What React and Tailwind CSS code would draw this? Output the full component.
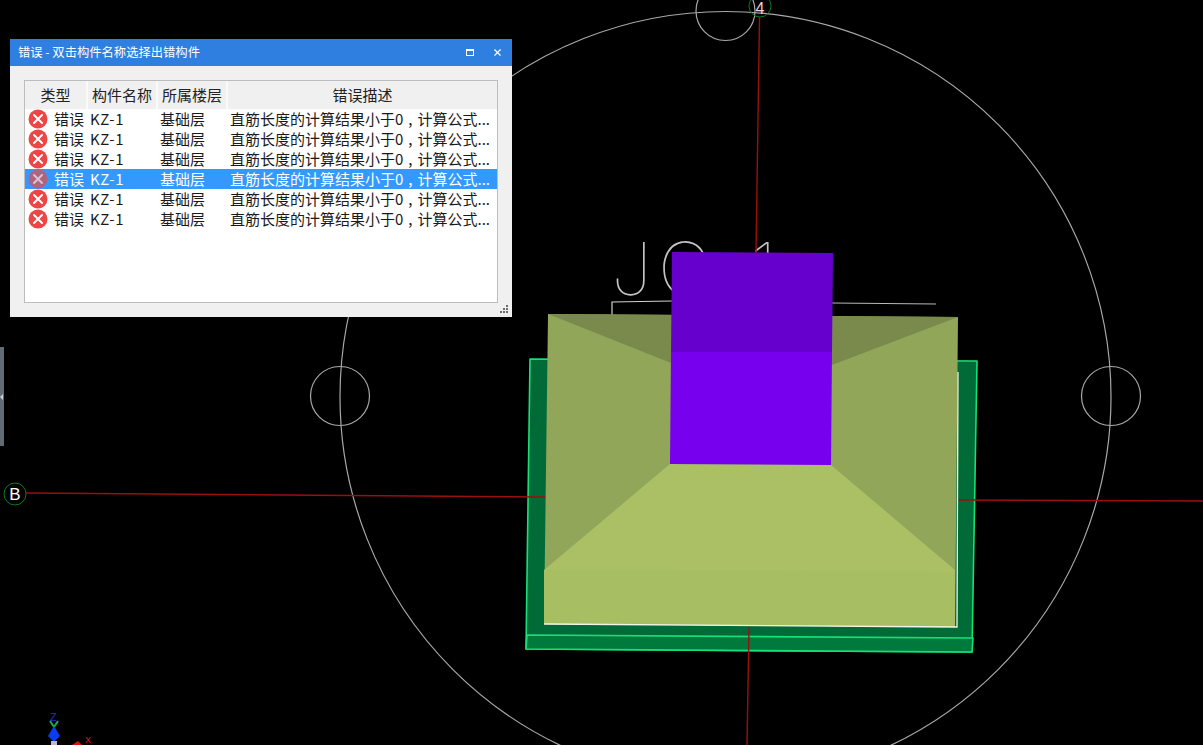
import React from 'react';
import { X } from 'lucide-react';

const rows = [false, false, false, true, false, false];
const uiFont = 'font-["Noto_Sans_CJK_SC","Liberation_Sans",sans-serif]';

// red round error badge from the list's first column
const ErrorIcon = ({ selected }) => (
  <svg width="20" height="20" viewBox="0 0 20 20" className="shrink-0">
    <circle cx="10" cy="10" r="9.5" fill={selected ? '#b0637f' : '#ee4545'} />
    <path d="M6 6 L14 14 M14 6 L6 14" stroke={selected ? '#d9c3d6' : '#ffffff'} strokeWidth="2" strokeLinecap="round" />
  </svg>
);

const ErrorRow = ({ selected }) => (
  <div className={`grid h-5 grid-cols-[63px_70px_70px_1fr] items-center text-[15px] leading-5 whitespace-nowrap ${selected ? 'bg-[#3399ff] text-white' : 'text-[#1a1a1a]'}`}>
    <div className="flex items-center gap-[6px] pl-[3px]">
      <ErrorIcon selected={selected} />
      <span>错误</span>
    </div>
    <div className="pl-[2px] tracking-[0.6px]">KZ-1</div>
    <div className="pl-[2px]">基础层</div>
    <div className="pl-[2px]">
      直筋长度的计算结果小于0<span className="mx-[5px]">,</span>计算公式...
    </div>
  </div>
);

const ErrorDialog = () => (
  <div className={`absolute left-[10px] top-[39px] flex h-[278px] w-[502px] flex-col bg-[#f0f0f0] ${uiFont}`}>
    <div className="flex h-[27px] items-center justify-between bg-[#2e7fe0] pl-2 pr-[9px] text-[12.3px] text-white">
      <span>错误 - 双击构件名称选择出错构件</span>
      <div className="flex items-center gap-[18px]">
        <span className="h-[7px] w-[8px] border border-t-2 border-white" />
        <X size={11} strokeWidth={2.5} />
      </div>
    </div>
    <div className="mx-[14px] mt-[14px] h-[223px] w-[474px] border border-[#bdbdbd] bg-white">
      <div className="grid h-[28px] grid-cols-[63px_70px_70px_1fr] items-center bg-[#f0f0f0] text-center text-[15px] leading-[28px] text-[#222222]">
        <div className="h-full border-r-2 border-[#fafafa]">类型</div>
        <div className="h-full border-r-2 border-[#fafafa]">构件名称</div>
        <div className="h-full border-r-2 border-[#fafafa]">所属楼层</div>
        <div className="h-full">错误描述</div>
      </div>
      {rows.map((selected, i) => (
        <ErrorRow key={i} selected={selected} />
      ))}
    </div>
    <svg width="10" height="9" viewBox="0 0 10 9" className="absolute bottom-[3px] right-[2px]">
      <g fill="#6e6e6e">
        <rect x="6" y="0" width="2" height="2" />
        <rect x="3" y="3" width="2" height="2" />
        <rect x="6" y="3" width="2" height="2" />
        <rect x="0" y="6" width="2" height="2" />
        <rect x="3" y="6" width="2" height="2" />
        <rect x="6" y="6" width="2" height="2" />
      </g>
    </svg>
  </div>
);

// the CAD viewport: a drawing, so everything sits in one svg
const Viewport = () => (
  <svg width="1203" height="745" viewBox="0 0 1203 745" className="absolute left-0 top-0">
    <g fill="none" stroke="#a8a8a8" strokeWidth="1.2">
      <circle cx="725.5" cy="397" r="385.5" />
      <circle cx="340" cy="396" r="29.5" />
      <circle cx="1111" cy="396" r="29.5" />
      <circle cx="725.5" cy="11" r="29.5" />
    </g>

    <g fill="none" stroke="#0c7a1e" strokeWidth="1">
      <circle cx="15" cy="494" r="11" />
      <circle cx="760" cy="6" r="11" />
    </g>
    <text x="15" y="500" textAnchor="middle" fontSize="17" fill="#ffffff" fontFamily="Liberation Sans, sans-serif">B</text>
    <text x="760" y="14" textAnchor="middle" fontSize="16" fill="#f0d0d0" fontFamily="Liberation Sans, sans-serif">4</text>

    <text x="611 658 750" y="295" fontSize="73" fontWeight="100" fill="#c4c4c4" fontFamily="Inter, sans-serif">JC1</text>
    <polyline points="612,315 612,302 672,301" fill="none" stroke="#d0d0d0" strokeWidth="1.2" />
    <line x1="832" y1="303" x2="936" y2="304" stroke="#b8b8b8" strokeWidth="1.2" />

    <polygon points="530,359 977,361 972,652 526,649" fill="#006b36" stroke="#17e078" strokeWidth="1.6" strokeLinejoin="round" />
    <polygon points="527,635 973,638 972,652 526,649" fill="#00793c" stroke="#17e078" strokeWidth="1.6" strokeLinejoin="round" />

    <g stroke="#9a1010" strokeWidth="1.4">
      <line x1="26" y1="493" x2="546" y2="497" />
      <line x1="958" y1="500" x2="1203" y2="501" />
      <line x1="759.5" y1="17" x2="756" y2="253" />
      <line x1="749" y1="627" x2="747" y2="745" />
    </g>

    <polygon points="548,314 958,317 955,627 544,624" fill="#92a65a" />
    <polygon points="548,314 958,317 832,365 671,363" fill="#7a8a4c" />
    <polygon points="670,464 831,465 955,570 955,627 544,624 544,570" fill="#abc065" />
    <polygon points="544,570 955,572 955,627 544,624" fill="#a8be63" />
    <polyline points="958,372 957,627 544,624" fill="none" stroke="#f2f6ea" strokeWidth="1.3" />

    <polygon points="672,252 833,253 832,352 671,352" fill="#6600cc" />
    <polygon points="671,352 832,352 831,465 670,464" fill="#7700ee" />

    <text x="50" y="721" fontSize="11" fill="#1c2fd0" fontFamily="Liberation Sans, sans-serif">Z</text>
    <path d="M50 721 L54 727 L58 721" fill="none" stroke="#1fae3c" strokeWidth="2" />
    <polygon points="54,726 60,736 55,741 53,741 48,736" fill="#0a3cf0" />
    <rect x="51" y="741" width="6" height="4" fill="#b8b8d0" />
    <polygon points="72,745 78,741 82,745" fill="#e01010" />
    <text x="85" y="743" fontSize="9" fill="#e01010" fontFamily="Liberation Sans, sans-serif">X</text>
  </svg>
);

export default function App() {
  return (
    <div className="relative h-[745px] w-[1203px] overflow-hidden bg-black">
      <Viewport />
      <div className="absolute left-0 top-[347px] flex h-[99px] w-[4px] items-center bg-[#5f6b75]">
        <span className="h-0 w-0 border-y-[3px] border-r-[3px] border-y-transparent border-r-[#c8ced3]" />
      </div>
      <ErrorDialog />
    </div>
  );
}
